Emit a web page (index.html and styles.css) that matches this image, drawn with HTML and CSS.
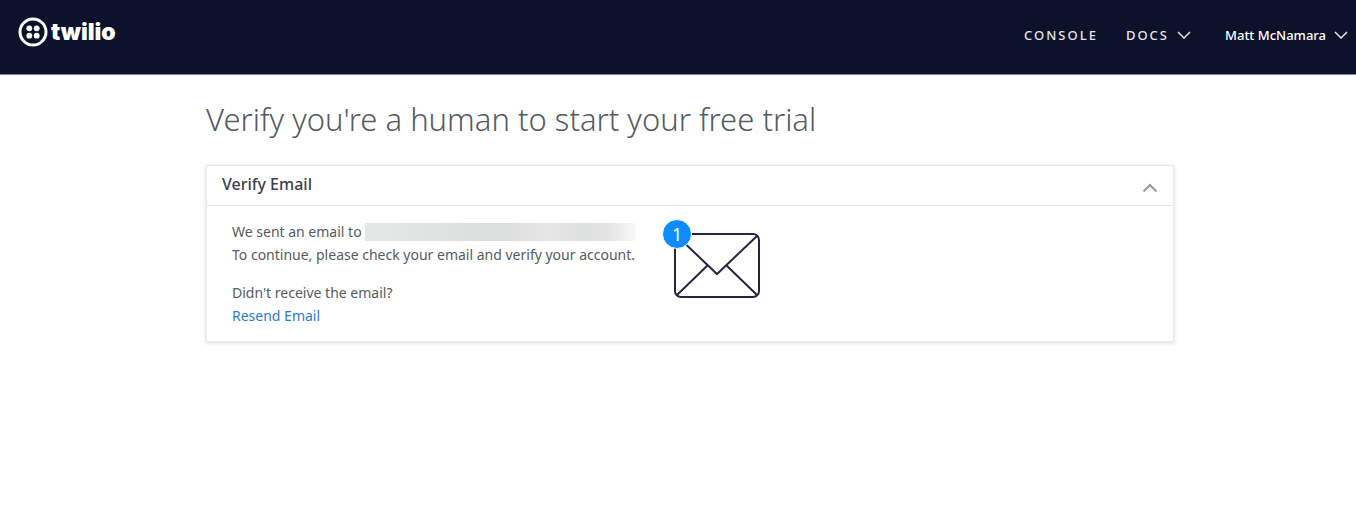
FILE: index.html
```html
<!DOCTYPE html>
<html lang="en">
<head>
  <meta charset="UTF-8" />
  <meta name="viewport" content="width=device-width, initial-scale=1.0"/>
  <title>Twilio - Verify</title>
  <link rel="stylesheet" href="styles.css">
</head>
<body>
  <header class="navbar">
    <a class="logo" href="#">
      <svg class="logo-mark" viewBox="0 0 30 30" aria-hidden="true">
        <circle cx="15" cy="15" r="13" fill="none" stroke="#fff" stroke-width="3"/>
        <g fill="#fff">
          <circle cx="11.3" cy="11.3" r="2.9"/>
          <circle cx="18.7" cy="11.3" r="2.9"/>
          <circle cx="11.3" cy="18.7" r="2.9"/>
          <circle cx="18.7" cy="18.7" r="2.9"/>
        </g>
      </svg>
      <span class="logo-text">twilio</span>
    </a>
    <nav class="nav-links">
      <a class="nav-caps" href="#">CONSOLE</a>
      <a class="nav-caps" href="#">DOCS
        <svg class="chevron" viewBox="0 0 14 8" aria-hidden="true"><path d="M1 1l6 6 6-6"/></svg>
      </a>
      <a class="nav-user" href="#">Matt McNamara
        <svg class="chevron" viewBox="0 0 14 8" aria-hidden="true"><path d="M1 1l6 6 6-6"/></svg>
      </a>
    </nav>
  </header>

  <main class="page">
    <h1>Verify you're a human to start your free trial</h1>

    <section class="card">
      <div class="card-header">
        <h2>Verify Email</h2>
        <button class="toggle" type="button" aria-label="Collapse">
          <svg viewBox="0 0 16 10" aria-hidden="true"><path d="M1.5 8.500L8 2l6.500 6.500"/></svg>
        </button>
      </div>
      <div class="card-body">
        <div class="message">
          <p>We sent an email to <span class="address"></span><br>
          To continue, please check your email and verify your account.</p>
          <p>Didn't receive the email?<br>
          <a href="#">Resend Email</a></p>
        </div>
        <div class="envelope">
          <svg viewBox="0 0 86 66" aria-hidden="true">
            <rect x="1" y="1" width="84" height="63" rx="6"/>
            <path d="M2 2l41 39L83 3M3 62l31-30M83 62L52 32"/>
          </svg>
          <span class="badge">1</span>
        </div>
      </div>
    </section>
  </main>
</body>
</html>
```

FILE: styles.css
```css
* {
  box-sizing: border-box;
}
body {
  font-family: "Noto Sans", "Open Sans", sans-serif;
  background: #fff;
  color: #565b5f;
  margin: 0;
}
.navbar {
  display: flex;
  justify-content: space-between;
  align-items: center;
  height: 75px;
  padding: 0 8px 4px 18px;
  background: #0d122b;
  border-bottom: 1px solid #8a8c99;
}
.logo {
  display: flex;
  align-items: center;
  gap: 3px;
  margin-bottom: 6px;
  color: #fff;
  text-decoration: none;
}
.logo-mark {
  width: 30px;
  height: 30px;
}
.logo-text {
  font-family: Inter, sans-serif;
  font-size: 23px;
  font-weight: 900;
  line-height: 30px;
}
.nav-links {
  display: flex;
  align-items: center;
  gap: 28px;
}
.nav-links a {
  display: flex;
  align-items: center;
  gap: 8px;
  color: #fff;
  font-size: 13px;
  font-weight: 500;
  text-decoration: none;
}
.nav-links .nav-caps {
  color: #e4e5ea;
  letter-spacing: 2px;
}
.nav-links .nav-user {
  margin-left: 6px;
}
.chevron {
  width: 14px;
  height: 8px;
  fill: none;
  stroke: #e4e5ea;
  stroke-width: 1.5;
}
.page {
  padding: 23px 182px 24px 206px;
}
h1 {
  margin: 0 0 25px;
  font-size: 31px;
  font-weight: 300;
  line-height: 42px;
}
.card {
  border: 1px solid #e8e9ea;
  box-shadow: 0 1px 4px rgba(0, 0, 0, 0.15);
}
.card-header {
  display: flex;
  justify-content: space-between;
  align-items: center;
  height: 40px;
  padding: 0 15px;
  border-bottom: 1px solid #e8e9ea;
}
h2 {
  margin: 0 0 3px;
  color: #3c4248;
  font-size: 16px;
  font-weight: 500;
}
.toggle {
  padding: 4px 0 0;
  border: none;
  background: none;
  cursor: pointer;
}
.toggle svg {
  display: block;
  width: 16px;
  height: 10px;
  fill: none;
  stroke: #999;
  stroke-width: 2;
}
.card-body {
  display: flex;
  gap: 38px;
  padding: 14px 25px;
}
.message {
  font-size: 14px;
  line-height: 23px;
}
.message p {
  margin: 0 0 15px;
}
.message p:last-child {
  margin-bottom: 0;
}
.message a {
  color: #2e7bd1;
  text-decoration: none;
}
.address {
  display: inline-block;
  width: 271px;
  height: 18px;
  vertical-align: -4px;
  background: linear-gradient(90deg, #e6e7e7, #dcdddd 50%, #e6e6e5 68%, #dfe0e0 80%, #e4e4e4 90%, #fafafa);
}
.envelope {
  position: relative;
  width: 86px;
  margin-top: 13px;
}
.envelope svg {
  display: block;
  width: 86px;
  height: 66px;
  fill: none;
  stroke: #232840;
  stroke-width: 2;
}
.badge {
  position: absolute;
  top: -14px;
  left: -12px;
  width: 30px;
  height: 30px;
  border: 1px solid #fff;
  border-radius: 50%;
  background: #0d8bff;
  color: #fff;
  font-size: 18px;
  line-height: 28px;
  text-align: center;
}
```
